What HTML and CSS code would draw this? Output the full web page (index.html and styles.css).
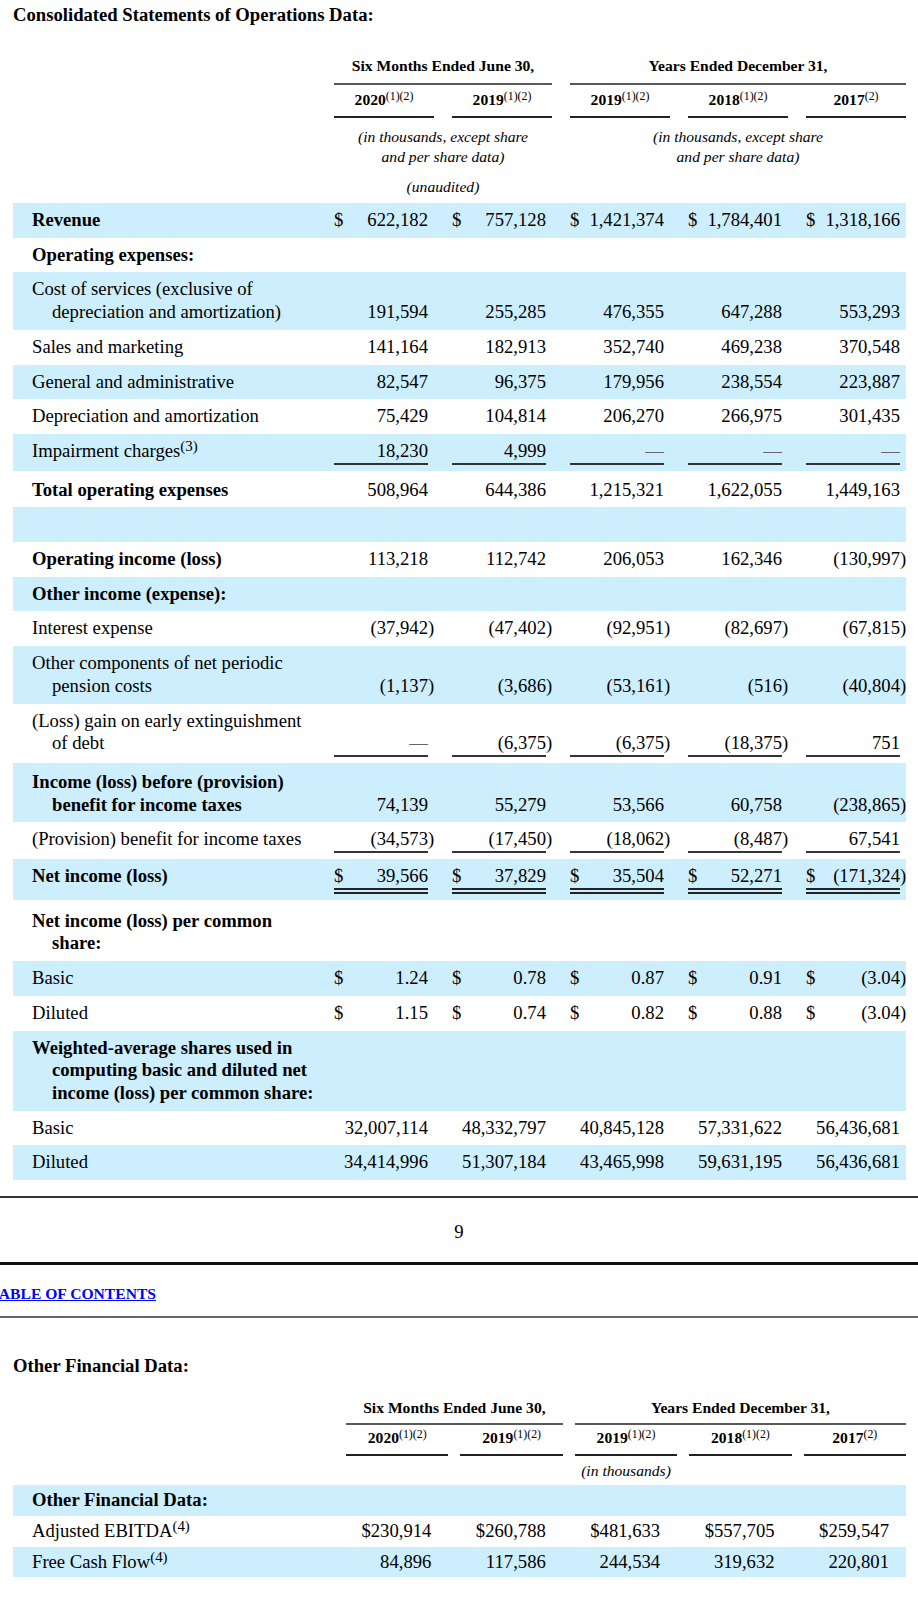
FILE: index.html
```html
<!DOCTYPE html>
<html lang="en">
<head>
<meta charset="utf-8">
<title>Consolidated Statements of Operations Data</title>
<link rel="stylesheet" href="styles.css">
</head>
<body>
<h1 class="title">Consolidated Statements of Operations Data:</h1>
<table class="fin ops">
<colgroup>
<col class="c-lab">
<col class="c-n"><col class="c-p"><col class="c-g">
<col class="c-n"><col class="c-p"><col class="c-g">
<col class="c-n"><col class="c-p"><col class="c-g">
<col class="c-n"><col class="c-p"><col class="c-g">
<col class="c-n"><col class="c-p">
</colgroup>
<thead>
<tr class="h-grp"><td></td><td colspan="5" class="grp">Six Months Ended June 30,</td><td></td><td colspan="8" class="grp">Years Ended December 31,</td></tr>
<tr class="h-yr"><td></td><td colspan="2" class="yr">2020<sup>(1)(2)</sup></td><td></td><td colspan="2" class="yr">2019<sup>(1)(2)</sup></td><td></td><td colspan="2" class="yr">2019<sup>(1)(2)</sup></td><td></td><td colspan="2" class="yr">2018<sup>(1)(2)</sup></td><td></td><td colspan="2" class="yr">2017<sup>(2)</sup></td></tr>
<tr class="h-note"><td></td><td colspan="5">(in thousands, except share<br>and per share data)</td><td></td><td colspan="8">(in thousands, except share<br>and per share data)</td></tr>
<tr class="h-unaud"><td></td><td colspan="5">(unaudited)</td><td colspan="9"></td></tr>
</thead>
<tbody>
<tr class="band"><td class="lab b">Revenue</td>
<td class="n"><div class="v"><span class="cur">$</span>622,182</div></td><td class="p"></td><td></td>
<td class="n"><div class="v"><span class="cur">$</span>757,128</div></td><td class="p"></td><td></td>
<td class="n"><div class="v"><span class="cur">$</span>1,421,374</div></td><td class="p"></td><td></td>
<td class="n"><div class="v"><span class="cur">$</span>1,784,401</div></td><td class="p"></td><td></td>
<td class="n"><div class="v"><span class="cur">$</span>1,318,166</div></td><td class="p"></td></tr>
<tr><td class="lab b">Operating expenses:</td><td colspan="14"></td></tr>
<tr class="band"><td class="lab">Cost of services (exclusive of depreciation and amortization)</td>
<td class="n"><div class="v">191,594</div></td><td class="p"></td><td></td>
<td class="n"><div class="v">255,285</div></td><td class="p"></td><td></td>
<td class="n"><div class="v">476,355</div></td><td class="p"></td><td></td>
<td class="n"><div class="v">647,288</div></td><td class="p"></td><td></td>
<td class="n"><div class="v">553,293</div></td><td class="p"></td></tr>
<tr><td class="lab">Sales and marketing</td>
<td class="n"><div class="v">141,164</div></td><td class="p"></td><td></td>
<td class="n"><div class="v">182,913</div></td><td class="p"></td><td></td>
<td class="n"><div class="v">352,740</div></td><td class="p"></td><td></td>
<td class="n"><div class="v">469,238</div></td><td class="p"></td><td></td>
<td class="n"><div class="v">370,548</div></td><td class="p"></td></tr>
<tr class="band"><td class="lab">General and administrative</td>
<td class="n"><div class="v">82,547</div></td><td class="p"></td><td></td>
<td class="n"><div class="v">96,375</div></td><td class="p"></td><td></td>
<td class="n"><div class="v">179,956</div></td><td class="p"></td><td></td>
<td class="n"><div class="v">238,554</div></td><td class="p"></td><td></td>
<td class="n"><div class="v">223,887</div></td><td class="p"></td></tr>
<tr><td class="lab">Depreciation and amortization</td>
<td class="n"><div class="v">75,429</div></td><td class="p"></td><td></td>
<td class="n"><div class="v">104,814</div></td><td class="p"></td><td></td>
<td class="n"><div class="v">206,270</div></td><td class="p"></td><td></td>
<td class="n"><div class="v">266,975</div></td><td class="p"></td><td></td>
<td class="n"><div class="v">301,435</div></td><td class="p"></td></tr>
<tr class="band ul"><td class="lab">Impairment charges<sup class="fn">(3)</sup></td>
<td class="n"><div class="v u">18,230</div></td><td class="p"></td><td></td>
<td class="n"><div class="v u">4,999</div></td><td class="p"></td><td></td>
<td class="n"><div class="v u"><span class="dash">—</span></div></td><td class="p"></td><td></td>
<td class="n"><div class="v u"><span class="dash">—</span></div></td><td class="p"></td><td></td>
<td class="n"><div class="v u"><span class="dash">—</span></div></td><td class="p"></td></tr>
<tr class="after"><td class="lab b">Total operating expenses</td>
<td class="n"><div class="v">508,964</div></td><td class="p"></td><td></td>
<td class="n"><div class="v">644,386</div></td><td class="p"></td><td></td>
<td class="n"><div class="v">1,215,321</div></td><td class="p"></td><td></td>
<td class="n"><div class="v">1,622,055</div></td><td class="p"></td><td></td>
<td class="n"><div class="v">1,449,163</div></td><td class="p"></td></tr>
<tr class="band"><td class="lab">&nbsp;</td><td colspan="14"></td></tr>
<tr><td class="lab b">Operating income (loss)</td>
<td class="n"><div class="v">113,218</div></td><td class="p"></td><td></td>
<td class="n"><div class="v">112,742</div></td><td class="p"></td><td></td>
<td class="n"><div class="v">206,053</div></td><td class="p"></td><td></td>
<td class="n"><div class="v">162,346</div></td><td class="p"></td><td></td>
<td class="n"><div class="v">(130,997</div></td><td class="p">)</td></tr>
<tr class="band"><td class="lab b">Other income (expense):</td><td colspan="14"></td></tr>
<tr><td class="lab">Interest expense</td>
<td class="n"><div class="v">(37,942</div></td><td class="p">)</td><td></td>
<td class="n"><div class="v">(47,402</div></td><td class="p">)</td><td></td>
<td class="n"><div class="v">(92,951</div></td><td class="p">)</td><td></td>
<td class="n"><div class="v">(82,697</div></td><td class="p">)</td><td></td>
<td class="n"><div class="v">(67,815</div></td><td class="p">)</td></tr>
<tr class="band"><td class="lab">Other components of net periodic pension costs</td>
<td class="n"><div class="v">(1,137</div></td><td class="p">)</td><td></td>
<td class="n"><div class="v">(3,686</div></td><td class="p">)</td><td></td>
<td class="n"><div class="v">(53,161</div></td><td class="p">)</td><td></td>
<td class="n"><div class="v">(516</div></td><td class="p">)</td><td></td>
<td class="n"><div class="v">(40,804</div></td><td class="p">)</td></tr>
<tr class="ul"><td class="lab">(Loss) gain on early extinguishment of debt</td>
<td class="n"><div class="v u"><span class="dash">—</span></div></td><td class="p"></td><td></td>
<td class="n"><div class="v u">(6,375</div></td><td class="p">)</td><td></td>
<td class="n"><div class="v u">(6,375</div></td><td class="p">)</td><td></td>
<td class="n"><div class="v u">(18,375</div></td><td class="p">)</td><td></td>
<td class="n"><div class="v u">751</div></td><td class="p"></td></tr>
<tr class="band after"><td class="lab b">Income (loss) before (provision) benefit for income taxes</td>
<td class="n"><div class="v">74,139</div></td><td class="p"></td><td></td>
<td class="n"><div class="v">55,279</div></td><td class="p"></td><td></td>
<td class="n"><div class="v">53,566</div></td><td class="p"></td><td></td>
<td class="n"><div class="v">60,758</div></td><td class="p"></td><td></td>
<td class="n"><div class="v">(238,865</div></td><td class="p">)</td></tr>
<tr class="ul"><td class="lab">(Provision) benefit for income taxes</td>
<td class="n"><div class="v u">(34,573</div></td><td class="p">)</td><td></td>
<td class="n"><div class="v u">(17,450</div></td><td class="p">)</td><td></td>
<td class="n"><div class="v u">(18,062</div></td><td class="p">)</td><td></td>
<td class="n"><div class="v u">(8,487</div></td><td class="p">)</td><td></td>
<td class="n"><div class="v u">67,541</div></td><td class="p"></td></tr>
<tr class="band dbl"><td class="lab b">Net income (loss)</td>
<td class="n"><div class="v dd"><span class="cur">$</span>39,566</div></td><td class="p"></td><td></td>
<td class="n"><div class="v dd"><span class="cur">$</span>37,829</div></td><td class="p"></td><td></td>
<td class="n"><div class="v dd"><span class="cur">$</span>35,504</div></td><td class="p"></td><td></td>
<td class="n"><div class="v dd"><span class="cur">$</span>52,271</div></td><td class="p"></td><td></td>
<td class="n"><div class="v dd"><span class="cur">$</span>(171,324</div></td><td class="p">)</td></tr>
<tr class="spaced"><td class="lab b">Net income (loss) per common share:</td><td colspan="14"></td></tr>
<tr class="band"><td class="lab">Basic</td>
<td class="n"><div class="v"><span class="cur">$</span>1.24</div></td><td class="p"></td><td></td>
<td class="n"><div class="v"><span class="cur">$</span>0.78</div></td><td class="p"></td><td></td>
<td class="n"><div class="v"><span class="cur">$</span>0.87</div></td><td class="p"></td><td></td>
<td class="n"><div class="v"><span class="cur">$</span>0.91</div></td><td class="p"></td><td></td>
<td class="n"><div class="v"><span class="cur">$</span>(3.04</div></td><td class="p">)</td></tr>
<tr><td class="lab">Diluted</td>
<td class="n"><div class="v"><span class="cur">$</span>1.15</div></td><td class="p"></td><td></td>
<td class="n"><div class="v"><span class="cur">$</span>0.74</div></td><td class="p"></td><td></td>
<td class="n"><div class="v"><span class="cur">$</span>0.82</div></td><td class="p"></td><td></td>
<td class="n"><div class="v"><span class="cur">$</span>0.88</div></td><td class="p"></td><td></td>
<td class="n"><div class="v"><span class="cur">$</span>(3.04</div></td><td class="p">)</td></tr>
<tr class="band"><td class="lab b">Weighted-average shares used in computing basic and diluted net income (loss) per common share:</td><td colspan="14"></td></tr>
<tr><td class="lab">Basic</td>
<td class="n"><div class="v">32,007,114</div></td><td class="p"></td><td></td>
<td class="n"><div class="v">48,332,797</div></td><td class="p"></td><td></td>
<td class="n"><div class="v">40,845,128</div></td><td class="p"></td><td></td>
<td class="n"><div class="v">57,331,622</div></td><td class="p"></td><td></td>
<td class="n"><div class="v">56,436,681</div></td><td class="p"></td></tr>
<tr class="band"><td class="lab">Diluted</td>
<td class="n"><div class="v">34,414,996</div></td><td class="p"></td><td></td>
<td class="n"><div class="v">51,307,184</div></td><td class="p"></td><td></td>
<td class="n"><div class="v">43,465,998</div></td><td class="p"></td><td></td>
<td class="n"><div class="v">59,631,195</div></td><td class="p"></td><td></td>
<td class="n"><div class="v">56,436,681</div></td><td class="p"></td></tr>
</tbody>
</table>

<hr class="rule rule-page">
<div class="pnum">9</div>
<hr class="rule rule-thick">
<div class="toc"><a href="#">TABLE OF CONTENTS</a></div>
<hr class="rule rule-toc">

<h2 class="title title2">Other Financial Data:</h2>
<table class="fin other">
<colgroup>
<col class="o-lab">
<col class="o-n"><col class="o-g">
<col class="o-n"><col class="o-g">
<col class="o-n"><col class="o-g">
<col class="o-n"><col class="o-g">
<col class="o-n">
</colgroup>
<thead>
<tr class="oh-grp"><td></td><td colspan="3" class="grp">Six Months Ended June 30,</td><td></td><td colspan="5" class="grp">Years Ended December 31,</td></tr>
<tr class="oh-yr"><td></td><td class="yr">2020<sup>(1)(2)</sup></td><td></td><td class="yr">2019<sup>(1)(2)</sup></td><td></td><td class="yr">2019<sup>(1)(2)</sup></td><td></td><td class="yr">2018<sup>(1)(2)</sup></td><td></td><td class="yr">2017<sup>(2)</sup></td></tr>
<tr class="oh-note"><td></td><td colspan="9">(in thousands)</td></tr>
</thead>
<tbody>
<tr class="band"><td class="lab b">Other Financial Data:</td><td colspan="9"></td></tr>
<tr><td class="lab">Adjusted EBITDA<sup class="fn">(4)</sup></td>
<td class="on">$230,914</td><td></td>
<td class="on">$260,788</td><td></td>
<td class="on">$481,633</td><td></td>
<td class="on">$557,705</td><td></td>
<td class="on">$259,547</td></tr>
<tr class="band"><td class="lab">Free Cash Flow<sup class="fn">(4)</sup></td>
<td class="on">84,896</td><td></td>
<td class="on">117,586</td><td></td>
<td class="on">244,534</td><td></td>
<td class="on">319,632</td><td></td>
<td class="on">220,801</td></tr>
</tbody>
</table>
</body>
</html>
```

FILE: styles.css
```css
html, body {
  margin: 0;
  padding: 0;
  background: #ffffff;
}

body {
  font-family: "Liberation Serif", "Times New Roman", serif;
  color: #000000;
  font-size: 18.67px;
  line-height: 22.7px;
}

.title {
  font-size: 18.67px;
  line-height: 23px;
  font-weight: bold;
  margin: 3px 0 0 13px;
}

.fin {
  border-collapse: separate;
  border-spacing: 0;
  table-layout: fixed;
  width: 893px;
  margin-left: 13px;
  font-size: 18.67px;
  line-height: 22.7px;
}

.ops {
  margin-top: 22px;
}

.c-lab { width: 321px; }
.c-n { width: 94px; }
.c-p { width: 6px; }
.c-g { width: 18px; }

.fin td {
  padding: 6px 0;
  vertical-align: bottom;
  white-space: nowrap;
}

.fin thead td {
  font-size: 15.6px;
  line-height: 20px;
  text-align: center;
  vertical-align: bottom;
}

.fin .grp,
.fin .yr {
  font-weight: bold;
}

.ops .h-grp td {
  padding: 8px 0 7px;
}

.ops .h-grp .grp {
  border-bottom: 2px solid #5a5a5a;
}

.ops .h-yr td {
  padding: 5px 0 6px;
}

.fin .yr {
  border-bottom: 2px solid #222222;
}

.fin sup {
  font-size: 0.76em;
  line-height: 0;
  vertical-align: 0.42em;
  font-weight: normal;
}

.fin sup.fn {
  font-size: 0.8em;
  vertical-align: 0.4em;
}

.ops .h-note td {
  font-style: italic;
  padding: 9px 0 0;
  vertical-align: top;
}

.ops .h-unaud td {
  font-style: italic;
  padding: 10px 0 6px;
}

.fin td.lab {
  white-space: normal;
  padding-left: 39px;
  padding-right: 20px;
  text-indent: -20px;
  text-align: left;
}

.fin .b {
  font-weight: bold;
}

.band {
  background: #cdeefd;
}

.fin td.p {
  text-align: left;
}

.v {
  display: flex;
  justify-content: flex-end;
  align-items: baseline;
}

.cur {
  margin-right: auto;
}

.v.u {
  border-bottom: 2px solid #333333;
}

.v.dd {
  border-bottom: 6px double #222222;
}

.dash {
  color: #666666;
}

.fin tr.ul td {
  padding-bottom: 8px;
}

.fin tr.ul td.n {
  padding-bottom: 6px;
}

.fin tr.dbl td {
  padding-bottom: 12px;
}

.fin tr.dbl td.n {
  padding-bottom: 6px;
}

.fin tr.after td {
  padding-top: 8px;
}

.fin tr.spaced td {
  padding-top: 10px;
}

.rule {
  border: 0;
  margin: 0;
  height: 0;
}

.rule-page {
  margin-top: 16px;
  border-top: 2px solid #333333;
}

.pnum {
  text-align: center;
  font-size: 18.67px;
  line-height: 23px;
  margin-top: 22px;
}

.rule-thick {
  margin-top: 19px;
  border-top: 3px solid #111111;
}

.toc {
  margin: 19px 0 0 -10.4px;
  font-size: 15.6px;
  line-height: 20px;
  font-weight: bold;
}

.toc a {
  color: #0000ff;
  text-decoration: underline;
}

.rule-toc {
  margin-top: 12px;
  border-top: 2px solid #666666;
}

.title2 {
  margin-top: 36px;
}

.other {
  margin-top: 15px;
}

.o-lab { width: 333px; }
.o-n { width: 102.4px; }
.o-g { width: 12px; }

.other .oh-grp td {
  padding: 6px 0 5px;
}

.other .oh-grp .grp {
  border-bottom: 2px solid #5a5a5a;
}

.other .oh-yr td {
  padding: 3px 0 6px;
}

.other .oh-note td {
  font-style: italic;
  padding: 5px 0 4px;
}

.other tbody td {
  padding: 4px 0;
}

.other td.on {
  text-align: right;
  padding-right: 17px;
}
```
